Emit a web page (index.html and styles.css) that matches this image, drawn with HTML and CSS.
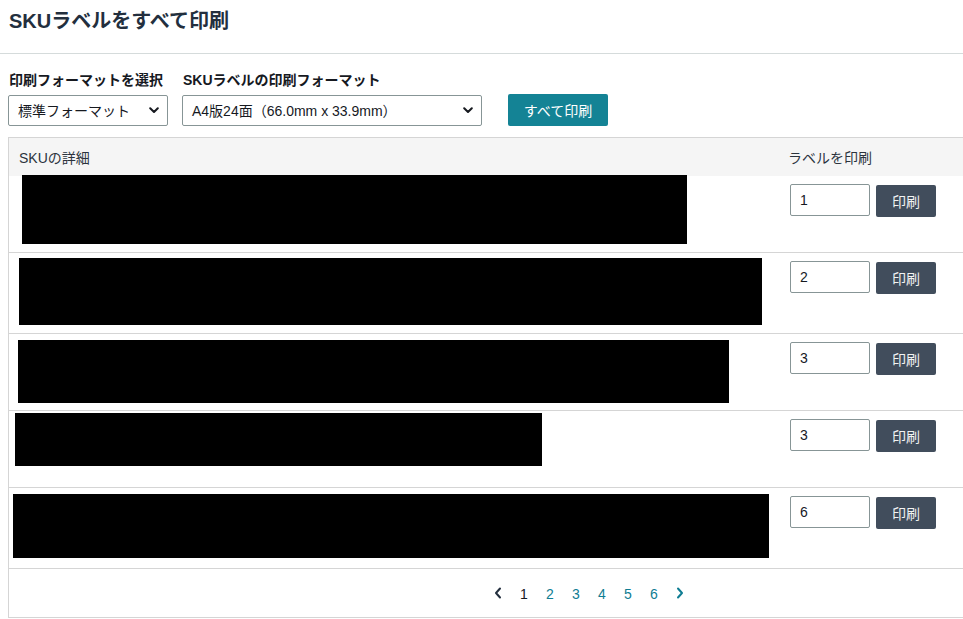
FILE: index.html
```html
<!DOCTYPE html>
<html lang="ja">
<head>
<meta charset="utf-8">
<title>SKUラベルをすべて印刷</title>
<link rel="stylesheet" href="styles.css">
</head>
<body>
<header class="page-head">
  <h1 class="title">SKUラベルをすべて印刷</h1>
</header>
<section class="controls">
  <div class="field">
    <div class="label">印刷フォーマットを選択</div>
    <div class="select sel-format">
      <span>標準フォーマット</span>
      <svg class="chev" width="10" height="7" viewBox="0 0 10 7"><path d="M1.2 1.2 L5 5 L8.8 1.2" fill="none" stroke="#16191f" stroke-width="2" stroke-linecap="round" stroke-linejoin="round"/></svg>
    </div>
  </div>
  <div class="field">
    <div class="label">SKUラベルの印刷フォーマット</div>
    <div class="select sel-size">
      <span>A4版24面（66.0mm x 33.9mm）</span>
      <svg class="chev" width="10" height="7" viewBox="0 0 10 7"><path d="M1.2 1.2 L5 5 L8.8 1.2" fill="none" stroke="#16191f" stroke-width="2" stroke-linecap="round" stroke-linejoin="round"/></svg>
    </div>
  </div>
  <button class="btn-primary">すべて印刷</button>
</section>

<div class="table">
  <div class="thead">
    <div class="th th-detail">SKUの詳細</div>
    <div class="th th-print">ラベルを印刷</div>
  </div>

  <div class="row" style="height:77px">
    <div class="cell-detail"><div class="redact" style="margin:-1px 0 0 13px;width:665px;height:69px"></div></div>
    <div class="cell-print"><input class="qty" value="1"><button class="btn-dark">印刷</button></div>
  </div>
  <div class="row" style="height:81px">
    <div class="cell-detail"><div class="redact" style="margin:5px 0 0 10px;width:743px;height:67px"></div></div>
    <div class="cell-print"><input class="qty" value="2"><button class="btn-dark">印刷</button></div>
  </div>
  <div class="row" style="height:77px">
    <div class="cell-detail"><div class="redact" style="margin:6px 0 0 9px;width:711px;height:63px"></div></div>
    <div class="cell-print"><input class="qty" value="3"><button class="btn-dark">印刷</button></div>
  </div>
  <div class="row" style="height:77px">
    <div class="cell-detail"><div class="redact" style="margin:2px 0 0 6px;width:527px;height:53px"></div></div>
    <div class="cell-print"><input class="qty" value="3"><button class="btn-dark">印刷</button></div>
  </div>
  <div class="row" style="height:81px">
    <div class="cell-detail"><div class="redact" style="margin:6px 0 0 4px;width:756px;height:64px"></div></div>
    <div class="cell-print"><input class="qty" value="6"><button class="btn-dark">印刷</button></div>
  </div>

  <nav class="pager">
    <span class="pg-arrow">
      <svg width="8" height="12" viewBox="0 0 8 12"><path d="M6 1.5 L2 6 L6 10.5" fill="none" stroke="#232f3e" stroke-width="2" stroke-linecap="round" stroke-linejoin="round"/></svg>
    </span>
    <span class="pg current">1</span>
    <span class="pg">2</span>
    <span class="pg">3</span>
    <span class="pg">4</span>
    <span class="pg">5</span>
    <span class="pg">6</span>
    <span class="pg-arrow">
      <svg width="8" height="12" viewBox="0 0 8 12"><path d="M2 1.5 L6 6 L2 10.5" fill="none" stroke="#0f7d93" stroke-width="2" stroke-linecap="round" stroke-linejoin="round"/></svg>
    </span>
  </nav>
</div>
</body>
</html>
```
FILE: styles.css
```css
html, body {
  overflow: hidden;
}
body {
  margin: 0;
  font-family: "Liberation Sans", "Noto Sans CJK JP", sans-serif;
  color: #16191f;
  background: #ffffff;
  font-size: 14px;
  line-height: 20px;
}

.page-head {
  height: 54px;
  border-bottom: 1px solid #d5dbdb;
  box-sizing: border-box;
  padding: 9px 9px 0;
}
.title {
  margin: 0;
  font-size: 20px;
  line-height: 24px;
  font-weight: bold;
  color: #232f3e;
}

.controls {
  display: flex;
  align-items: flex-end;
  padding: 16px 0 0 8px;
}
.field {
  display: flex;
  flex-direction: column;
  margin-right: 14px;
}
.label {
  font-weight: bold;
  font-size: 14px;
  line-height: 20px;
  padding-left: 1px;
  margin-bottom: 5px;
  color: #16191f;
}
.select {
  box-sizing: border-box;
  height: 31px;
  border: 1px solid #879596;
  border-radius: 2px;
  display: flex;
  align-items: center;
  justify-content: space-between;
  padding: 0 5px 0 9px;
  background: #fff;
  color: #16191f;
}
.sel-format { width: 160px; }
.sel-size { width: 300px; }
.chev { margin-right: 3px; }

.btn-primary {
  margin-left: 12px;
  width: 100px;
  height: 32px;
  border: none;
  border-radius: 2px;
  background: #148395;
  color: #ffffff;
  font-family: inherit;
  font-size: 14px;
  font-weight: normal;
  padding: 0;
  margin-bottom: 0;
}

.table {
  margin: 11px 0 0 8px;
  width: 1160px;
  border: 1px solid #d5d5d5;
}
.thead {
  display: grid;
  grid-template-columns: 770px 1fr;
  height: 38px;
  background: #f5f5f5;
  align-items: center;
}
.th {
  font-size: 14px;
  color: #2b333d;
  padding-top: 1px;
}
.th-detail { padding-left: 10px; }
.th-print { padding-left: 9px; }

.row {
  display: grid;
  grid-template-columns: 770px 1fr;
  border-bottom: 1px solid #d5d5d5;
  box-sizing: border-box;
}
.cell-detail {
  overflow: visible;
}
.redact {
  background: #000;
}
.cell-print {
  display: flex;
  align-items: flex-start;
  gap: 6px;
  padding: 8px 0 0 11px;
}
.qty {
  box-sizing: border-box;
  width: 80px;
  height: 32px;
  border: 1px solid #879596;
  border-radius: 2px;
  padding: 0 9px;
  font-family: inherit;
  font-size: 14px;
  color: #16191f;
  margin: 0;
}
.btn-dark {
  width: 60px;
  height: 32px;
  margin-top: 1px;
  border: none;
  border-radius: 2px;
  background: #414d5c;
  color: #f2f3f3;
  font-family: inherit;
  font-size: 14px;
  padding: 0;
}

.pager {
  height: 48px;
  display: flex;
  align-items: center;
  justify-content: center;
  font-size: 14px;
}
.pg-arrow {
  display: flex;
  align-items: center;
  width: 26px;
  justify-content: center;
}
.pg {
  width: 26px;
  text-align: center;
  color: #0f7d93;
  padding-top: 2px;
}
.pg.current { color: #16191f; }
```
